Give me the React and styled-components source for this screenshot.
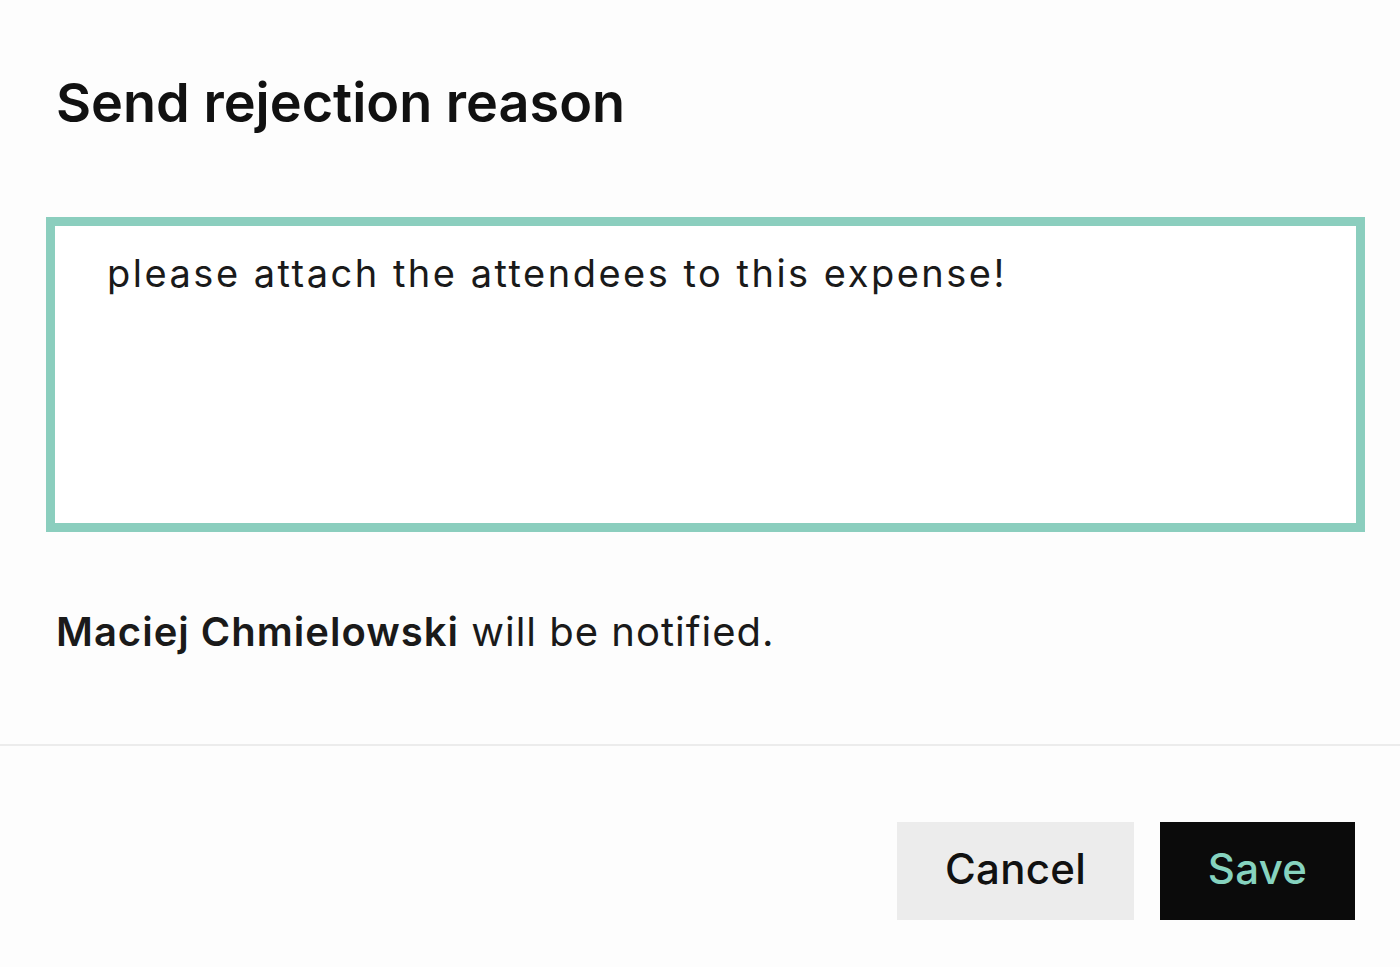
import React from "react";
import styled, { createGlobalStyle } from "styled-components";

const Global = createGlobalStyle`
  html, body { margin: 0; padding: 0; background: #fdfdfd; }
  body { font-family: Inter, "Liberation Sans", sans-serif; color: #111; }
`;

const Dialog = styled.div`
  width: 1400px;
  height: 967px;
  display: flex;
  flex-direction: column;
  background: #fdfdfd;
`;

const Body = styled.div`
  display: flex;
  flex-direction: column;
  padding: 73px 35px 0 46px;
`;

const Title = styled.h1`
  margin: 0 0 0 10px;
  font-size: 54px;
  line-height: 60px;
  font-weight: 600;
  letter-spacing: 0px;
  color: #111;
`;

const Reason = styled.textarea`
  margin-top: 84px;
  box-sizing: border-box;
  width: 100%;
  height: 315px;
  border: 9px solid #8bcebe;
  border-radius: 0;
  padding: 20px 52px;
  font-family: Inter, "Liberation Sans", sans-serif;
  font-size: 38px;
  line-height: 54px;
  letter-spacing: 2.5px;
  color: #1a1a1a;
  background: #fff;
  resize: none;
  outline: none;
`;

const Notice = styled.p`
  margin: 76px 0 0 10px;
  font-size: 40px;
  line-height: 48px;
  letter-spacing: 1px;
  color: #1a1a1a;
  strong { font-weight: 600; }
`;

const Divider = styled.hr`
  margin: 88px 0 0;
  border: none;
  border-top: 2px solid #ececec;
  width: 100%;
`;

const Footer = styled.div`
  display: flex;
  justify-content: flex-end;
  gap: 26px;
  padding: 76px 45px 0 0;
`;

const Button = styled.button`
  box-sizing: border-box;
  height: 98px;
  width: ${(p) => p.$w}px;
  padding: 0 0 6px;
  border: none;
  border-radius: 0;
  font-family: Inter, "Liberation Sans", sans-serif;
  font-size: 42px;
  font-weight: 500;
  letter-spacing: 0.3px;
  cursor: pointer;
  background: ${(p) => (p.$primary ? "#0b0b0b" : "#ececec")};
  color: ${(p) => (p.$primary ? "#86d3bf" : "#111")};
`;

export default function App() {
  return (
    <>
      <Global />
      <Dialog>
        <Body>
          <Title>Send rejection reason</Title>
          <Reason readOnly value="please attach the attendees to this expense!" />
          <Notice>
            <strong>Maciej Chmielowski</strong> will be notified.
          </Notice>
        </Body>
        <Divider />
        <Footer>
          <Button $w={237}>Cancel</Button>
          <Button $w={195} $primary>
            Save
          </Button>
        </Footer>
      </Dialog>
    </>
  );
}
